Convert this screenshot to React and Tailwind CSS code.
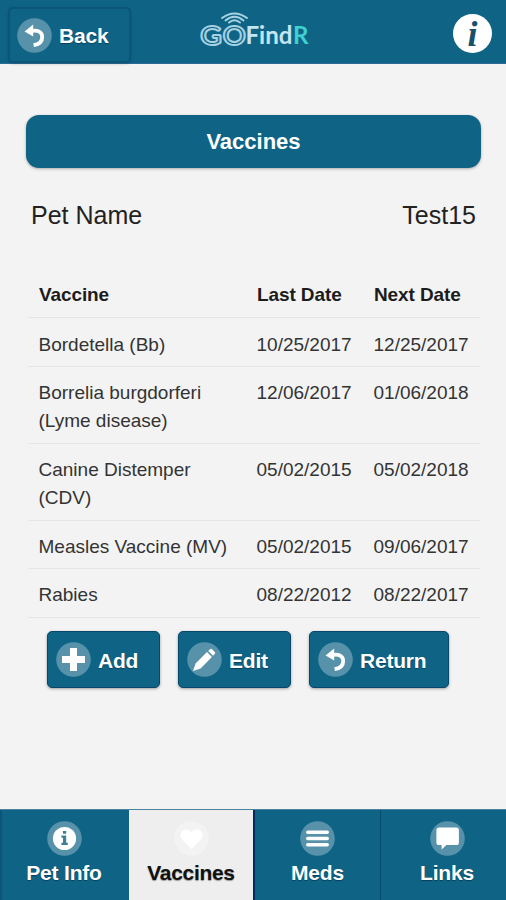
const ROWS = [
  { name: ["Bordetella (Bb)"], last: "10/25/2017", next: "12/25/2017", h: "h-12" },
  { name: ["Borrelia burgdorferi", "(Lyme disease)"], last: "12/06/2017", next: "01/06/2018", h: "h-[77px]" },
  { name: ["Canine Distemper", "(CDV)"], last: "05/02/2015", next: "05/02/2018", h: "h-[77px]" },
  { name: ["Measles Vaccine (MV)"], last: "05/02/2015", next: "09/06/2017", h: "h-[48px]" },
  { name: ["Rabies"], last: "08/22/2012", next: "08/22/2017", h: "h-[49px]" },
];

function Disc({ children }) {
  return (
    <svg className="size-[35px] shrink-0" viewBox="0 0 35 35">
      <circle cx="17.5" cy="17.5" r="17.3" fill="#fff" fillOpacity="0.3" />
      {children}
    </svg>
  );
}

function BackIcon() {
  return (
    <Disc>
      <path d="M7.6 13.6 L16.2 6.6 L16.2 18.6 Z" fill="#fff" />
      <path d="M13.5 13.2 C21 11.6 25.2 14 25.2 19 C25.2 23.5 22.5 26.4 16.6 27.2" fill="none" stroke="#fff" strokeWidth="3.8" />
    </Disc>
  );
}

function PlusIcon() {
  return (
    <Disc>
      <path d="M17.5 6v23M6 17.5h23" stroke="#fff" strokeWidth="7" />
    </Disc>
  );
}

function PencilIcon() {
  return (
    <Disc>
      <path d="M6 29 L8.6 21.6 L20 10.1 L24.9 15 L13.6 26.4 Z" fill="#fff" />
      <path d="M21.2 9 L23 7.2 Q24 6.2 25 7.2 L27.8 10 Q28.8 11 27.8 12 L26 13.8 Z" fill="#fff" />
    </Disc>
  );
}

function InfoIcon() {
  return (
    <Disc>
      <circle cx="17.5" cy="17.5" r="11.6" fill="#fff" />
      <path d="M15.9 10h3.3v2.7h-3.3zM14.4 14.6h4.8v7.2h1.6v2.2h-6.4v-2.2h1.6v-5h-1.6z" fill="#3e8197" />
    </Disc>
  );
}

function HeartIcon() {
  return (
    <Disc>
      <path d="M17.5 28 L8 18.3 C4.8 14.5 7.2 8.5 12 8.5 C14.6 8.5 16.6 10 17.5 12 C18.4 10 20.4 8.5 23 8.5 C27.8 8.5 30.2 14.5 27 18.3 Z" fill="#fff" />
    </Disc>
  );
}

function BarsIcon() {
  return (
    <Disc>
      <path d="M7.8 11.2h19.4M7.8 17.5h19.4M7.8 23.8h19.4" stroke="#fff" strokeWidth="3.6" strokeLinecap="round" />
    </Disc>
  );
}

function ChatIcon() {
  return (
    <Disc>
      <path d="M9 6.4h17.3q2.6 0 2.6 2.6v12.4q0 2.6-2.6 2.6H16.4L11.6 28.6V24H9q-2.6 0-2.6-2.6V9q0-2.6 2.6-2.6z" fill="#fff" />
    </Disc>
  );
}

function Logo() {
  return (
    <svg className="h-[46px] w-[120px]" viewBox="0 0 120 46" fontFamily="Lato, sans-serif">
      <g fill="none" stroke="#a9d3e3" strokeWidth="1.9" strokeLinecap="round">
        <path d="M27 9 Q39.5 0 52 9" />
        <path d="M30.5 11.5 Q39.5 4.2 48.5 11.5" />
        <path d="M34 13.6 Q39.5 9 45 13.6" />
      </g>
      <g fill="#8fc3d6" stroke="#a5d1e1" strokeWidth="4" strokeLinejoin="round" fontSize="24" fontWeight="300">
        <text x="6" y="34.5" textLength="20" lengthAdjust="spacingAndGlyphs" paintOrder="stroke" style={{ fill: "#0f6486" }}>G</text>
        <text x="28.5" y="34.5" textLength="21.5" lengthAdjust="spacingAndGlyphs" paintOrder="stroke" style={{ fill: "#0f6486" }}>O</text>
      </g>
      <text x="50.5" y="35" fontSize="24.5" fontWeight="700" fill="#c3e4f1" textLength="47" lengthAdjust="spacingAndGlyphs">Find</text>
      <text x="98" y="35" fontSize="24.5" fontWeight="700" fill="#3fd0d0" textLength="15.5" lengthAdjust="spacingAndGlyphs">R</text>
    </svg>
  );
}

function Button({ icon, label, width }) {
  return (
    <button className={`flex h-[57px] items-center rounded-[5px] border border-[#07476c] bg-[#0f6486] pl-2 text-[21px] font-bold text-white shadow-[0_1px_3px_rgba(0,0,0,0.35)] [text-shadow:0_1px_1px_#07405a] ${width}`}>
      {icon}
      <span className="ml-[7px] mt-[3px] leading-6 tracking-[-0.2px]">{label}</span>
    </button>
  );
}

function Tab({ icon, label, active, className, labelClass = "" }) {
  return (
    <div className={`flex flex-col items-center pt-[11px] text-[21px] font-bold ${active ? "bg-[#eeeeee] text-[#111] [text-shadow:0_1px_1px_#999]" : "bg-[#0f6486] text-white [text-shadow:0_1px_1px_#07405a]"} ${className}`}>
      {icon}
      <span className={`mt-[5px] leading-6 ${labelClass}`}>{label}</span>
    </div>
  );
}

export default function App() {
  return (
    <div className="flex h-[900px] w-[506px] flex-col overflow-hidden bg-[#f3f3f3] font-['Liberation_Sans',Arial,sans-serif] text-[#222]">
      <header className="flex h-16 shrink-0 items-start border-b border-[#2b6c9c] bg-[#0f6486]">
        <button className="ml-2 mt-[7px] flex h-14 w-[123px] items-center rounded-[5px] border-2 border-[#0b5577] pl-[7px] text-[21px] font-bold text-white shadow-[0_1px_3px_rgba(0,0,0,0.2)] [text-shadow:0_1px_1px_#07405a]">
          <BackIcon />
          <span className="ml-[7px] mt-[2px] leading-6 tracking-[-0.2px]">Back</span>
        </button>
        <div className="ml-16 mt-[9px]">
          <Logo />
        </div>
        <div className="ml-auto mr-[14px] mt-[14px] flex size-[39px] items-center justify-center rounded-full bg-white">
          <span className="font-['Liberation_Serif',serif] text-[36px] font-bold italic leading-none text-[#17506b]">i</span>
        </div>
      </header>

      <main className="flex flex-1 flex-col">
        <h1 className="ml-[26px] mr-[25px] mt-[51px] flex h-[53px] items-center justify-center rounded-[13px] bg-[#0f6486] text-[22px] font-bold text-white shadow-[0_1px_3px_rgba(0,0,0,0.3)]">
          Vaccines
        </h1>
        <div className="ml-[31px] mr-[30px] mt-[32px] flex h-8 items-center justify-between text-[25px]">
          <span>Pet Name</span>
          <span>Test15</span>
        </div>

        <div className="ml-7 mr-[26px] mt-[38px] text-[19px] leading-[28.5px]">
          <div className="grid h-[48px] grid-cols-[218px_117px_1fr] border-b border-[#e4e4e4] pl-[11px] pt-[11px] font-bold tracking-[-0.1px] text-[#1c1c1c]">
            <span>Vaccine</span>
            <span>Last Date</span>
            <span>Next Date</span>
          </div>
          <div className="pt-[0.5px]">
            {ROWS.map((r) => (
              <div key={r.name[0]} className={`grid grid-cols-[218px_117px_1fr] border-b border-[#e6e6e6] pl-[10.5px] pt-[12px] text-[#333] ${r.h}`}>
                <span>
                  {r.name.map((line) => (
                    <span key={line} className="block">{line}</span>
                  ))}
                </span>
                <span>{r.last}</span>
                <span>{r.next}</span>
              </div>
            ))}
          </div>
        </div>

        <div className="ml-[47px] mt-[13.5px] flex gap-[18px]">
          <Button icon={<PlusIcon />} label="Add" width="w-[113px]" />
          <Button icon={<PencilIcon />} label="Edit" width="w-[113px]" />
          <Button icon={<BackIcon />} label="Return" width="w-[140px]" />
        </div>
      </main>

      <nav className="grid h-[91px] shrink-0 grid-cols-[129px_126px_126px_125px] border-t border-[#4c84a0]">
        <Tab icon={<InfoIcon />} label="Pet Info" className="border-l-2 border-[#0a5578] pr-[3px]" labelClass="tracking-[-0.2px]" />
        <Tab icon={<HeartIcon />} label="Vaccines" active className="border-r-2 border-[#06275f]" labelClass="tracking-[-0.3px]" />
        <Tab icon={<BarsIcon />} label="Meds" className="border-r border-[#084a6e]" labelClass="tracking-[-0.2px]" />
        <Tab icon={<ChatIcon />} label="Links" className="pl-[7px]" labelClass="tracking-[-0.2px]" />
      </nav>
    </div>
  );
}
